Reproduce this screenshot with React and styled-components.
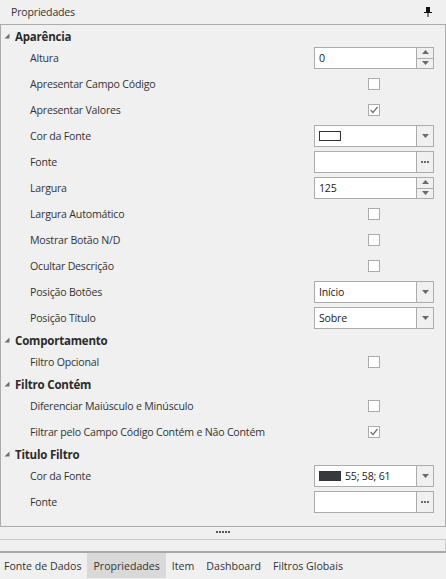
import React from 'react';
import styled, { createGlobalStyle } from 'styled-components';

const GlobalStyle = createGlobalStyle`
  body {
    margin: 0;
    background: #f0f0f0;
    font-family: "Open Sans", "Noto Sans", sans-serif;
    font-size: 10.6px;
    letter-spacing: -0.2px;
    color: #333;
  }
`;

const Root = styled.div`
  width: 446px;
  height: 579px;
  display: flex;
  flex-direction: column;
  background: #f0f0f0;
  overflow: hidden;
`;

const Header = styled.div`
  height: 24px;
  display: flex;
  align-items: center;
  justify-content: space-between;
  padding: 0 14px 0 11px;
  color: #333;
`;

const Panel = styled.div`
  height: 503px;
  box-sizing: border-box;
  border: 1px solid #acacac;
  padding-top: 2px;
`;

const CategoryRow = styled.div`
  height: 18px;
  display: flex;
  align-items: center;
  padding-left: 3px;
  gap: 5px;
  font-weight: 700;
  font-size: 11.5px;
  color: #2b2b2b;
`;

const PropRow = styled.div`
  height: 26px;
  display: flex;
  align-items: center;
  padding-left: 29px;
`;

const Label = styled.div`
  flex: 1;
  color: #333;
`;

const EditorCell = styled.div`
  width: 120px;
  margin-right: 11px;
  display: flex;
  justify-content: center;
`;

const Editor = styled.div`
  width: 120px;
  height: 22px;
  box-sizing: border-box;
  border: 1px solid #acacac;
  background: #fff;
  display: flex;
`;

const EditorText = styled.div`
  flex: 1;
  display: flex;
  align-items: center;
  gap: 4px;
  padding-left: 4px;
  color: #222;
`;

const Btn = styled.div`
  width: 16px;
  border-left: 1px solid #acacac;
  background: #f0f0f0;
  display: flex;
  flex-direction: column;
  align-items: center;
  justify-content: center;
`;

const SpinHalf = styled.div`
  flex: 1;
  width: 100%;
  display: flex;
  align-items: center;
  justify-content: center;
  & + & {
    border-top: 1px solid #acacac;
  }
`;

const Check = styled.div`
  width: 12px;
  height: 12px;
  box-sizing: border-box;
  border: 1px solid #acacac;
  background: #fff;
  display: flex;
  align-items: center;
  justify-content: center;
`;

const Swatch = styled.div`
  width: 22px;
  height: 10px;
  box-sizing: border-box;
  border: 1px solid #333;
  background: ${p => p.$fill || '#fff'};
`;

const Splitter = styled.div`
  height: 12px;
  display: flex;
  justify-content: center;
  align-items: flex-start;
  padding-top: 4px;
  box-sizing: border-box;
`;

const StatusBox = styled.div`
  height: 14px;
  box-sizing: border-box;
  border-top: 1px solid #c8c8c8;
  border-bottom: 2px solid #a8a8a8;
  border-right: 1px solid #c8c8c8;
`;

const Tabs = styled.div`
  height: 25px;
  display: flex;
  margin-left: -2px;
`;

const Tab = styled.div`
  display: flex;
  align-items: center;
  padding: 0 6px;
  letter-spacing: 0;
  color: #333;
  background: ${p => (p.$active ? '#d9d9d9' : 'transparent')};
`;

const Pin = () => (
  <svg width="8" height="10" viewBox="0 0 8 10">
    <rect x="2" y="0" width="4" height="6" fill="#111" />
    <rect x="0" y="5" width="8" height="1" fill="#111" />
    <rect x="3.5" y="6" width="1" height="4" fill="#111" />
  </svg>
);

const Triangle = () => (
  <svg width="6" height="6" viewBox="0 0 6 6">
    <polygon points="5.5,0.5 5.5,5.5 0.5,5.5" fill="#6f6f6f" />
  </svg>
);

const Down = () => (
  <svg width="7" height="4" viewBox="0 0 7 4">
    <polygon points="0,0 7,0 3.5,4" fill="#6a6a6a" />
  </svg>
);

const SpinUp = () => (
  <svg width="7" height="5" viewBox="0 0 7 5">
    <polygon points="0,4 7,4 3.5,0" fill="#6a6a6a" />
  </svg>
);

const Tick = () => (
  <svg width="10" height="10" viewBox="0 0 10 10">
    <polyline points="1.5,5 4,7.5 8.5,2" fill="none" stroke="#707070" strokeWidth="1.2" />
  </svg>
);

// small square dots, used for "..." buttons and the splitter grip
const DotRow = ({ n, color = '#6a6a6a' }) => (
  <svg width={n * 3 - 1} height="2" viewBox={`0 0 ${n * 3 - 1} 2`}>
    {Array.from({ length: n }).map((_, i) => (
      <rect key={i} x={i * 3} y="0" width="2" height="2" fill={color} />
    ))}
  </svg>
);

const Spin = ({ value }) => (
  <Editor>
    <EditorText>{value}</EditorText>
    <Btn>
      <SpinHalf><SpinUp /></SpinHalf>
      <SpinHalf><Down /></SpinHalf>
    </Btn>
  </Editor>
);

const Combo = ({ children }) => (
  <Editor>
    <EditorText>{children}</EditorText>
    <Btn><Down /></Btn>
  </Editor>
);

const Ellipsis = () => (
  <Editor>
    <EditorText />
    <Btn><DotRow n={3} /></Btn>
  </Editor>
);

const Category = ({ title }) => (
  <CategoryRow>
    <Triangle />
    {title}
  </CategoryRow>
);

const Prop = ({ label, children }) => (
  <PropRow>
    <Label>{label}</Label>
    <EditorCell>{children}</EditorCell>
  </PropRow>
);

const CheckBox = ({ checked }) => <Check>{checked && <Tick />}</Check>;

export default function App() {
  return (
    <Root>
      <GlobalStyle />
      <Header>
        <span>Propriedades</span>
        <Pin />
      </Header>
      <Panel>
        <Category title="Aparência" />
        <Prop label="Altura"><Spin value="0" /></Prop>
        <Prop label="Apresentar Campo Código"><CheckBox /></Prop>
        <Prop label="Apresentar Valores"><CheckBox checked /></Prop>
        <Prop label="Cor da Fonte"><Combo><Swatch /></Combo></Prop>
        <Prop label="Fonte"><Ellipsis /></Prop>
        <Prop label="Largura"><Spin value="125" /></Prop>
        <Prop label="Largura Automático"><CheckBox /></Prop>
        <Prop label="Mostrar Botão N/D"><CheckBox /></Prop>
        <Prop label="Ocultar Descrição"><CheckBox /></Prop>
        <Prop label="Posição Botões"><Combo>Início</Combo></Prop>
        <Prop label="Posição Título"><Combo>Sobre</Combo></Prop>
        <Category title="Comportamento" />
        <Prop label="Filtro Opcional"><CheckBox /></Prop>
        <Category title="Filtro Contém" />
        <Prop label="Diferenciar Maiúsculo e Minúsculo"><CheckBox /></Prop>
        <Prop label="Filtrar pelo Campo Código Contém e Não Contém"><CheckBox checked /></Prop>
        <Category title="Titulo Filtro" />
        <Prop label="Cor da Fonte"><Combo><Swatch $fill="#373a3d" />55; 58; 61</Combo></Prop>
        <Prop label="Fonte"><Ellipsis /></Prop>
      </Panel>
      <Splitter><DotRow n={5} color="#555" /></Splitter>
      <StatusBox />
      <Tabs>
        <Tab>Fonte de Dados</Tab>
        <Tab $active>Propriedades</Tab>
        <Tab>Item</Tab>
        <Tab>Dashboard</Tab>
        <Tab>Filtros Globais</Tab>
      </Tabs>
    </Root>
  );
}
